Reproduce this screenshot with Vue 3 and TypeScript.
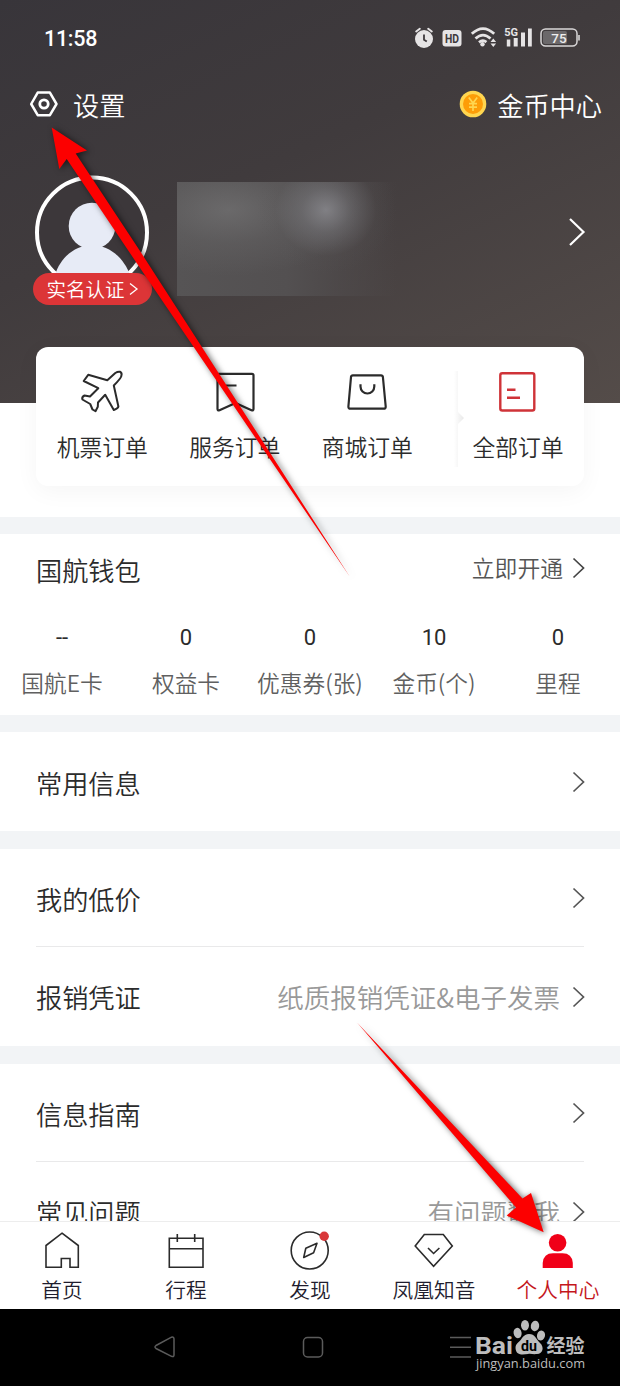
<script setup lang="ts">
interface Stat { value: string; label: string }
interface Row { label: string; note?: string }

const stats: Stat[] = [
  { value: '--', label: '国航E卡' },
  { value: '0', label: '权益卡' },
  { value: '0', label: '优惠券(张)' },
  { value: '10', label: '金币(个)' },
  { value: '0', label: '里程' },
]

const groups: Row[][] = [
  [{ label: '常用信息' }],
  [{ label: '我的低价' }, { label: '报销凭证', note: '纸质报销凭证&电子发票' }],
  [{ label: '信息指南' }, { label: '常见问题', note: '有问题戳我' }],
]
</script>

<template>
  <div class="phone">
    <header class="hero">
      <div class="status">
        <span class="time">11:58</span>
        <svg class="status-icons" width="170" height="26" viewBox="412 25 170 26">
          <g fill="#e6e4e5">
            <circle cx="424" cy="39" r="9" />
            <path d="M416.2 31.5l3.6-2.7M431.8 31.5l-3.6-2.7" stroke="#e6e4e5" stroke-width="2" stroke-linecap="round" />
            <path d="M424 34.5v5.2l2.8 1.8" fill="none" stroke="#3e393c" stroke-width="1.8" />
            <rect x="442.5" y="30" width="19" height="16.5" rx="3" />
            <text x="452" y="42.800" text-anchor="middle" class="hd" textLength="14" lengthAdjust="spacingAndGlyphs">HD</text>
            <path d="M471.800 33.800q11.200-10.300 22.400 0M475.500 38.500q7.500-6.800 15 0M479 42.300q3.900-3.200 7.400-.2" fill="none" stroke="#e6e4e5" stroke-width="2.800" />
            <circle cx="482.5" cy="44.300" r="2.200" />
            <path d="M490.5 42l2.8-3.6 2.8 3.6zM490.5 43.5l2.8 3.4 2.8-3.4z" />
            <text x="504.300" y="36.300" class="fiveg">5G</text>
            <rect x="506.800" y="39.500" width="3.500" height="7" />
            <rect x="513.700" y="38" width="4" height="8.500" />
            <rect x="521" y="32.500" width="4" height="14" />
            <rect x="528" y="28.500" width="3.800" height="18" />
          </g>
          <rect x="541" y="29" width="36" height="17" rx="4.500" fill="none" stroke="#d9d7d8" stroke-width="1.500" />
          <rect x="543" y="31" width="24" height="13" rx="2" fill="#6b686a" />
          <path d="M579 35v5.500" stroke="#d9d7d8" stroke-width="1.600" />
          <text x="559" y="43" text-anchor="middle" class="batt">75</text>
        </svg>
      </div>

      <div class="topbar">
        <span class="link">
          <svg class="gear" width="30" height="28" viewBox="0 0 30 28" fill="none" stroke="#fff" stroke-width="2.500">
            <path d="M8.700 2.600h12.200L27.500 14l-6.600 11.200H8.700L2.200 14z" stroke-linejoin="round" />
            <circle cx="15" cy="14" r="4.200" stroke-width="2.800" />
          </svg><span>设置</span>
        </span>
        <span class="link">
          <svg class="coin" width="28" height="28" viewBox="0 0 28 28">
            <circle cx="14" cy="14" r="13.300" fill="#ffd650" />
            <circle cx="14" cy="14" r="10" fill="#fd9d08" />
            <path d="M9.800 7.500L14 13l4.200-5.500M14 13v8M10 13.700h8M10 17.200h8" fill="none" stroke="#ffd650" stroke-width="1.700" />
          </svg><span>金币中心</span>
        </span>
      </div>

      <div class="profile">
        <div class="avatar">
          <svg width="116" height="104" viewBox="34 174 116 104">
            <circle cx="92" cy="232.500" r="55" fill="#3c373a" stroke="#fff" stroke-width="4" />
            <circle cx="92" cy="226" r="23.300" fill="#e7ebf6" />
            <path d="M55 275C60 258 75 245 92 245s32 13 38 30z" fill="#e7ebf6" />
          </svg>
          <span class="badge">实名认证<svg width="10" height="14" viewBox="0 0 10 14"><path d="M1 1.500L8 7l-7 5.500" fill="none" stroke="#fff" stroke-width="1.300" /></svg></span>
        </div>
        <div class="masked"></div>
        <svg class="go" width="18" height="30" viewBox="0 0 18 30"><path d="M2 2l13.500 13L2 28" fill="none" stroke="#fff" stroke-width="2.200" /></svg>
      </div>
    </header>

    <div class="orders-wrap">
      <section class="orders">
        <div class="order">
          <svg width="44" height="44" viewBox="80 370 44 44" fill="none" stroke="#2b2b2b" stroke-width="2" stroke-linejoin="round">
            <path d="M107.300 380.300L115.300 373Q118 371.300 120 371.800Q122.500 372.800 121.200 376.500Q120.300 379 113.800 385.500L118.400 406.500Q118 408.500 113.800 410L105.200 394.800L98 402.500L97.800 406.800L95.500 411.200L92.500 409.500L90.200 404L82.400 399.500Q81.500 397 84.500 395.500L90 396.500L98.300 388.200L83.700 381L88.200 374.800Z" />
          </svg>
          <span>机票订单</span>
        </div>
        <div class="order">
          <svg width="44" height="44" viewBox="213 370 44 44" fill="none" stroke="#2b2b2b" stroke-width="2.200" stroke-linejoin="round">
            <path d="M218.500 373.800H252q1.500 0 1.500 1.500V409q0 2-2 1.200L235.500 403L219.500 410.200q-2 .8-2-1.200V374.800q0-1 1-1zM226 385.500h10.500" />
          </svg>
          <span>服务订单</span>
        </div>
        <div class="order">
          <svg width="44" height="44" viewBox="345 370 44 44" fill="none" stroke="#2b2b2b" stroke-width="2.200" stroke-linejoin="round">
            <path d="M352.800 375.300H381q1.700 0 1.900 1.700L385.700 406.500q.1 2.200-2 2.200H350.500q-2.200 0-2.100-2.200L351 377q.2-1.700 1.800-1.700zM360.500 384.300v2.300a6.900 6.900 0 0 0 13.800 0v-2.300" />
          </svg>
          <span>商城订单</span>
        </div>
        <svg class="fold" width="12" height="96" viewBox="0 0 12 96">
          <defs><linearGradient id="foldShade"><stop offset="0" stop-color="#f7f7f7" stop-opacity="0" /><stop offset=".35" stop-color="#f8f8f8" /><stop offset="1" stop-color="#e8e8e8" /></linearGradient></defs>
          <path d="M0 0h4v41l6 6-6 6v43H0z" fill="url(#foldShade)" />
        </svg>
        <div class="order">
          <svg width="44" height="44" viewBox="496 370 44 44" fill="none" stroke="#cf3338" stroke-width="2.400">
            <rect x="500.300" y="373.200" width="34" height="37.300" rx="2" />
            <path d="M507 389.800h8.500M507 397.800h13" />
          </svg>
          <span>全部订单</span>
        </div>
      </section>
    </div>

    <section class="wallet">
      <div class="wallet-head">
        <h2>国航钱包</h2>
        <span class="open"><span>立即开通</span><svg width="14" height="22" viewBox="0 0 14 22"><path d="M1.500 1.500L11.500 11l-10 9.500" fill="none" stroke="#444" stroke-width="1.700" /></svg></span>
      </div>
      <div class="stats">
        <div v-for="s in stats" :key="s.label" class="stat">
          <b>{{ s.value }}</b><span>{{ s.label }}</span>
        </div>
      </div>
    </section>

    <section v-for="(g, i) in groups" :key="i" class="group">
      <div v-for="r in g" :key="r.label" class="row">
        <span class="label">{{ r.label }}</span>
        <span v-if="r.note" class="note">{{ r.note }}</span>
        <svg width="14" height="22" viewBox="0 0 14 22"><path d="M1.500 1.500L11.500 11l-10 9.500" fill="none" stroke="#555" stroke-width="1.700" /></svg>
      </div>
    </section>

    <nav class="tabs">
      <div class="tab">
        <svg width="40" height="40" viewBox="42 1231 40 40" fill="none" stroke="#2b2b2b" stroke-width="1.600"><path d="M62 1233.200L78.300 1245.500V1267.300H70V1258.500H61.300V1267.300H46V1245.500z" /></svg>
        <span>首页</span>
      </div>
      <div class="tab">
        <svg width="40" height="40" viewBox="166 1231 40 40" fill="none" stroke="#2b2b2b" stroke-width="1.600"><path d="M169.300 1238.200H203V1267.300H169.300zM169.300 1248.700H203M177.300 1234v8M194.700 1234v8" /></svg>
        <span>行程</span>
      </div>
      <div class="tab">
        <svg width="42" height="40" viewBox="289 1231 42 40" fill="none" stroke="#2b2b2b" stroke-width="1.600"><circle cx="309.700" cy="1250.500" r="18.500" /><path d="M317 1243.300L305.800 1248.200L303.700 1257.500L313.600 1252.700z" stroke-linejoin="round" /><circle cx="324.200" cy="1236.200" r="4.700" fill="#d9383a" stroke="none" /></svg>
        <span>发现</span>
      </div>
      <div class="tab">
        <svg width="40" height="40" viewBox="414 1231 40 40" fill="none" stroke="#2b2b2b" stroke-width="1.600"><path d="M424.300 1234.500H443.300L452.300 1246L433.600 1266.200L415.200 1246zM428 1248l5.600 5.500 5.800-5.500" /></svg>
        <span>凤凰知音</span>
      </div>
      <div class="tab active">
        <svg width="40" height="40" viewBox="538 1231 40 40" fill="#f00018"><circle cx="557.600" cy="1242.700" r="8.800" /><path d="M542.700 1268V1263Q543.500 1253.300 553 1253.300H562.500Q572 1253.300 572.800 1263V1268z" /></svg>
        <span>个人中心</span>
      </div>
    </nav>

    <footer class="keys">
      <svg width="620" height="77" viewBox="0 1309 620 77" fill="none" stroke="#5b5b5b" stroke-width="1.500">
        <path d="M156 1345.500L171.500 1337.200Q174 1336.500 174 1339V1355Q174 1357.300 171.500 1356.300L156 1348.500Q154 1347 156 1345.500z" />
        <rect x="303.500" y="1337.500" width="19" height="19.500" rx="4" />
        <path d="M450 1337.500h21M450 1347.300h21M450 1357h21" />
        <g fill="#bdbdbd" stroke="none">
          <text x="475" y="1353.500" class="wm-bai" textLength="38" lengthAdjust="spacingAndGlyphs">Bai</text>
          <ellipse cx="517.600" cy="1333" rx="4" ry="5.200" transform="rotate(-12 517.600 1333)" />
          <ellipse cx="525" cy="1325.300" rx="4" ry="5.300" />
          <ellipse cx="535" cy="1326" rx="4.200" ry="5.300" transform="rotate(8 535 1326)" />
          <ellipse cx="541" cy="1335.500" rx="4" ry="5" transform="rotate(15 541 1335.500)" />
          <path d="M529 1334C535 1334 536 1339 540 1343C544.500 1347 543 1354 537 1354C533 1354.500 531 1353.500 528 1354C523 1354.500 516 1356 515.500 1348C515.500 1343 519 1343 522 1338Q525 1334 529 1334z" />
          <text x="521" y="1351" class="wm-du" textLength="16" lengthAdjust="spacingAndGlyphs">du</text>
          <text x="546.500" y="1352.500" class="wm-cn">经验</text>
          <text x="476" y="1368.300" class="wm-url" textLength="109" lengthAdjust="spacingAndGlyphs">jingyan.baidu.com</text>
        </g>
      </svg>
    </footer>

    <svg class="pointers" width="620" height="1386" viewBox="0 0 620 1386" fill="#fc0000">
      <path d="M51.700 127.500L87 150.500L75.700 153.500L140 251L350 577L138 265L66.700 159L59.300 169z" />
      <path d="M357 1022.500L522.500 1198.500L531 1193L543.700 1232.300L506.700 1215.500L516 1207.500z" />
    </svg>
  </div>
</template>

<style>
body { margin: 0; background: #fff; }
</style>

<style scoped>
.phone {
  position: relative;
  display: flex;
  flex-direction: column;
  width: 620px;
  height: 1386px;
  overflow: hidden;
  background: #f2f4f6;
  color: #2b2b2b;
  font-family: "Noto Sans CJK SC", sans-serif;
  font-weight: 350;
}
.phone > * { flex-shrink: 0; box-sizing: border-box; }
svg { display: block; flex-shrink: 0; }
.hero {
  height: 403px;
  color: #fff;
  background: linear-gradient(155deg, #38353a 0%, #403b3d 42%, #544c49 100%);
}
.status {
  display: flex;
  justify-content: space-between;
  align-items: center;
  height: 76px;
  padding: 0 38px 0 44px;
}
.time { font: 500 21.500px Roboto, sans-serif; letter-spacing: -0.3px; }
.hd { font: 700 12.500px Roboto, sans-serif; fill: #3e393c; }
.fiveg { font: 700 11px Roboto, sans-serif; }
.batt { font: 500 13.500px Roboto, sans-serif; fill: #eee; }
.topbar {
  display: flex;
  justify-content: space-between;
  height: 56px;
  padding: 0 18px 0 29px;
}
.link { display: flex; align-items: center; font-size: 26.200px; line-height: 54px; }
.link span { padding-top: 2px; }
.gear { margin-right: 14px; }
.coin { margin-right: 10px; }
.profile { display: flex; padding: 42px 34px 0 32px; }
.avatar { width: 120px; margin-right: 25px; }
.avatar > svg { margin-left: 2px; }
.badge {
  position: relative;
  display: flex;
  align-items: center;
  justify-content: center;
  gap: 4px;
  width: 119px;
  height: 32px;
  margin-top: -5px;
  margin-left: 1px;
  border-radius: 16px;
  background: #dc3537;
  font-size: 19.500px;
  line-height: 30px;
}
.masked {
  width: 220px;
  height: 114px;
  margin-top: 8px;
  background:
    radial-gradient(ellipse 70px 64px at 149px 28px, rgba(140, 140, 145, .8), rgba(120, 120, 124, .5) 35%, rgba(90, 88, 89, .13) 72%, rgba(85, 83, 84, 0)),
    radial-gradient(ellipse 130px 66px at 52px 28px, rgba(128, 128, 129, .5), rgba(110, 109, 110, .3) 50%, rgba(100, 99, 100, 0)),
    linear-gradient(90deg, #565455 0%, #535051 50%, rgba(80, 76, 77, .6) 75%, rgba(72, 68, 69, 0) 100%);
}
.go { margin: 43px 0 0 auto; }
.orders-wrap {
  height: 114px;
  background: #fff;
}
.orders {
  position: relative;
  display: grid;
  grid-template-columns: 132.500px 132.500px 132.500px 24.500px 120px;
  width: 548px;
  height: 139px;
  margin: 0 36px;
  top: -56px;
  border-radius: 12px;
  background: #fff;
  box-shadow: 0 5px 24px rgba(0, 0, 0, .045);
}
.order { display: flex; flex-direction: column; align-items: center; padding-top: 23px; font-size: 22.800px; }
.order span { margin-top: 16px; line-height: 34px; white-space: nowrap; }
.fold { margin: 24px 0 0 20px; }
.wallet {
  height: 181px;
  margin-top: 17px;
  background: #fff;
}
.wallet-head {
  display: flex;
  justify-content: space-between;
  align-items: center;
  height: 68px;
  padding: 0 34px 0 36px;
}
h2 { margin: 4px 0 0; font-size: 26.200px; font-weight: 350; line-height: 38px; }
.open { display: flex; align-items: center; gap: 9px; font-size: 22.800px; line-height: 34px; color: #555; }
.stats { display: grid; grid-template-columns: repeat(5, 124px); padding-top: 20px; }
.stat { display: flex; flex-direction: column; align-items: center; color: #606060; font-size: 22.700px; white-space: nowrap; }
.stat b { font: 400 22px/32px Roboto, sans-serif; color: #2b2b2b; }
.stat span { margin-top: 12px; line-height: 34px; }
.group { height: 197px; margin-top: 18px; padding: 0 34px 0 36px; background: #fff; }
.wallet + .group { height: 99px; margin-top: 17px; }
.row { display: flex; align-items: center; height: 97px; box-sizing: border-box; }
.row:only-child { height: 99px; }
.row + .row { height: 100px; margin-right: 2px; border-top: 1.500px solid #e9e9ea; }
.row + .row > svg { margin-right: -2px; }
.label, .note { margin-top: 2px; font-size: 26.200px; line-height: 38px; }
.row + .row .label, .row + .row .note { margin-top: 0; }
.label { margin-right: auto; }
.note { margin-right: 12px; color: #999; font-size: 26.500px; }
.tabs {
  position: absolute;
  left: 0;
  bottom: 77px;
  display: grid;
  grid-template-columns: repeat(5, 124px);
  width: 620px;
  height: 88px;
  border-top: 1px solid #ededed;
  background: #fff;
}
.tab { display: flex; flex-direction: column; align-items: center; padding-top: 9px; font-size: 20.700px; color: #1f1d2e; }
.tab span { line-height: 30px; margin-top: 3px; }
.active { color: #c4161c; }
.keys { position: absolute; left: 0; bottom: 0; width: 620px; height: 77px; background: #000; }
.wm-bai { font: 700 24px Roboto, sans-serif; }
.wm-du { font: 700 15px Roboto, sans-serif; fill: #000; }
.wm-cn { font: 700 19px "Noto Sans CJK SC", sans-serif; }
.wm-url { font: 500 13px "Open Sans", sans-serif; }
.pointers { position: absolute; left: 0; top: 0; filter: drop-shadow(2px 1px 3px rgba(0, 0, 0, .6)); }
</style>
